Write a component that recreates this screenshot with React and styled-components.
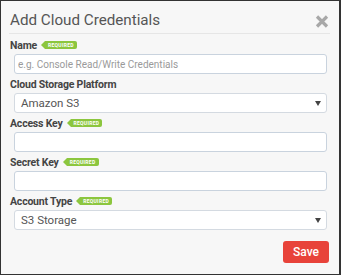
import React from 'react';
import styled, { createGlobalStyle } from 'styled-components'

const GlobalStyle = createGlobalStyle`
    html, body {
        margin: 0;
        padding: 0;
        background-color: #333333;
    }
    * {
        box-sizing: border-box;
    }
`

const Dialog = styled.div`
    width: 341px;
    height: 275px;
    background-color: #f7f7f7;
    border: 1px solid #333333;
    border-right-width: 2px;
    padding: 0 9px 0 8px;
    font-family: Roboto, "Liberation Sans", sans-serif;
    display: flex;
    flex-direction: column;
`
const Header = styled.div`
    display: flex;
    flex-direction: row;
    justify-content: space-between;
    align-items: center;
    padding: 9px 1px 3px 1px;
    border-bottom: 1px solid #e6e6e6;
`
const Title = styled.h1`
    margin: 0;
    font-size: 15.2px;
    line-height: 20px;
    font-weight: 400;
    color: #555555;
`
const Close = styled.button`
    border: none;
    background: none;
    padding: 0;
    margin: 2px 0 0 0;
    width: 14px;
    height: 13px;
    display: flex;
    cursor: pointer;
`
const Form = styled.form`
    display: flex;
    flex-direction: column;
    padding-top: 5px;
`
const Field = styled.div`
    display: flex;
    flex-direction: column;
    margin-bottom: 4px;
`
const Label = styled.label`
    display: flex;
    align-items: center;
    gap: 3px;
    height: 14px;
    margin: 0 0 1px 1px;
    font-size: 10.5px;
    line-height: 14px;
    font-weight: 700;
    letter-spacing: -0.2px;
    color: #444444;
`
const Required = styled.span`
    position: relative;
    display: inline-block;
    height: 8px;
    line-height: 8px;
    padding: 0 3px 0 3px;
    margin-left: 5px;
    margin-top: -2px;
    background-color: #8cc63e;
    border-radius: 0 2px 2px 0;
    color: #ffffff;
    font-size: 5px;
    font-weight: 700;
    letter-spacing: 0.3px;
    &::before {
        content: '';
        position: absolute;
        left: -4px;
        top: 0;
        border-style: solid;
        border-width: 4px 4px 4px 0;
        border-color: transparent #8cc63e transparent transparent;
    }
`
const Input = styled.input`
    margin-left: 5px;
    width: 313px;
    height: 20px;
    padding: 0 3px;
    border: 1px solid #c9d3de;
    border-radius: 3px;
    background-color: #ffffff;
    font-family: Roboto, "Liberation Sans", sans-serif;
    font-size: 10px;
    color: #555555;
    outline: none;
    &::placeholder {
        color: #9a9a9a;
    }
`
const SelectBox = styled.div`
    margin-left: 5px;
    width: 313px;
    height: 20px;
    padding: 0 5px 0 6px;
    border: 1px solid #d4dae1;
    border-radius: 3px;
    background-color: #ffffff;
    display: flex;
    align-items: center;
    justify-content: space-between;
    font-size: 11.5px;
    color: #555555;
`
const Caret = styled.span`
    width: 0;
    height: 0;
    border-style: solid;
    border-width: 5px 3px 0 3px;
    border-color: #444444 transparent transparent transparent;
`
const Footer = styled.div`
    display: flex;
    justify-content: flex-end;
    padding: 7px 1px 0 0;
`
const Save = styled.button`
    width: 46px;
    height: 22px;
    border: none;
    border-radius: 3px;
    background-color: #e8433a;
    color: #ffffff;
    font-family: Roboto, "Liberation Sans", sans-serif;
    font-size: 12px;
    font-weight: 500;
    cursor: pointer;
`

function Select({ value }) {
    return (
        <SelectBox>
            <span>{value}</span>
            <Caret />
        </SelectBox>
    )
}

export default function App() {
    return (
        <>
            <GlobalStyle />
            <Dialog>
                <Header>
                    <Title>Add Cloud Credentials</Title>
                    <Close aria-label="close">
                        <svg width="14" height="13" viewBox="0 0 14 13">
                            <path d="M2 1.5 L12 11.5 M12 1.5 L2 11.5" stroke="#a8a8a8" strokeWidth="3.2" strokeLinecap="butt" />
                        </svg>
                    </Close>
                </Header>
                <Form>
                    <Field>
                        <Label>Name<Required>REQUIRED</Required></Label>
                        <Input type="text" placeholder="e.g. Console Read/Write Credentials" />
                    </Field>
                    <Field>
                        <Label>Cloud Storage Platform</Label>
                        <Select value="Amazon S3" />
                    </Field>
                    <Field>
                        <Label>Access Key<Required>REQUIRED</Required></Label>
                        <Input type="text" />
                    </Field>
                    <Field>
                        <Label>Secret Key<Required>REQUIRED</Required></Label>
                        <Input type="password" />
                    </Field>
                    <Field>
                        <Label>Account Type<Required>REQUIRED</Required></Label>
                        <Select value="S3 Storage" />
                    </Field>
                    <Footer>
                        <Save type="button">Save</Save>
                    </Footer>
                </Form>
            </Dialog>
        </>
    )
}
